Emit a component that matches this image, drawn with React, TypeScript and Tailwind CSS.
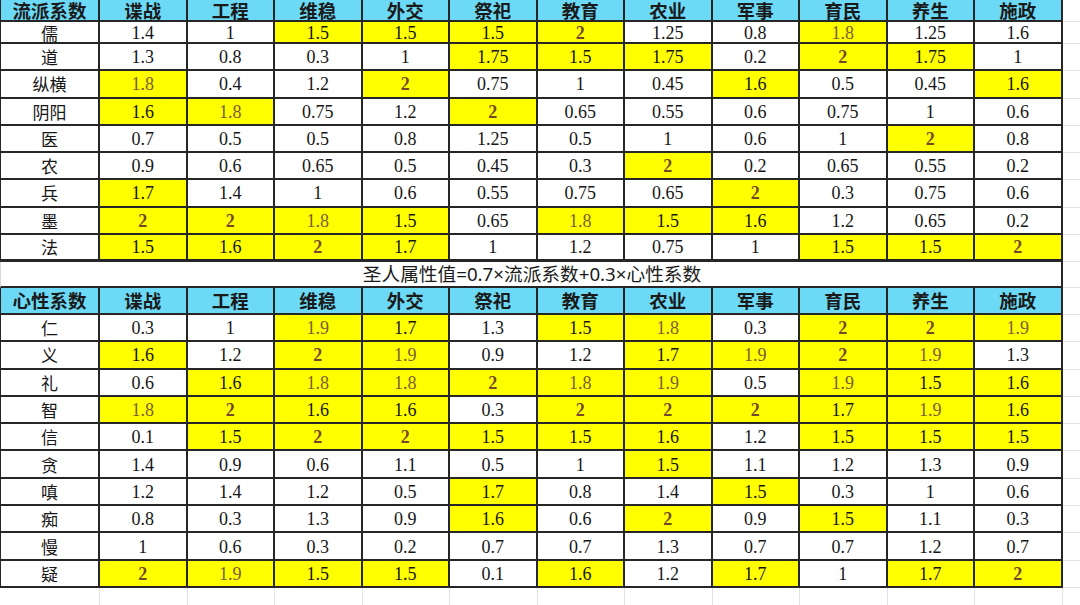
const cols = ['谍战', '工程', '维稳', '外交', '祭祀', '教育', '农业', '军事', '育民', '养生', '施政']

// "*" marks a highlighted (yellow) cell
const schools: [string, string][] = [
  ['儒', '1.4 1 1.5* 1.5* 1.5* 2* 1.25 0.8 1.8* 1.25 1.6'],
  ['道', '1.3 0.8 0.3 1 1.75* 1.5* 1.75* 0.2 2* 1.75* 1'],
  ['纵横', '1.8* 0.4 1.2 2* 0.75 1 0.45 1.6* 0.5 0.45 1.6*'],
  ['阴阳', '1.6* 1.8* 0.75 1.2 2* 0.65 0.55 0.6 0.75 1 0.6'],
  ['医', '0.7 0.5 0.5 0.8 1.25 0.5 1 0.6 1 2* 0.8'],
  ['农', '0.9 0.6 0.65 0.5 0.45 0.3 2* 0.2 0.65 0.55 0.2'],
  ['兵', '1.7* 1.4 1 0.6 0.55 0.75 0.65 2* 0.3 0.75 0.6'],
  ['墨', '2* 2* 1.8* 1.5* 0.65 1.8* 1.5* 1.6* 1.2 0.65 0.2'],
  ['法', '1.5* 1.6* 2* 1.7* 1 1.2 0.75 1 1.5* 1.5* 2*'],
]

const minds: [string, string][] = [
  ['仁', '0.3 1 1.9* 1.7* 1.3 1.5* 1.8* 0.3 2* 2* 1.9*'],
  ['义', '1.6* 1.2 2* 1.9* 0.9 1.2 1.7* 1.9* 2* 1.9* 1.3'],
  ['礼', '0.6 1.6* 1.8* 1.8* 2* 1.8* 1.9* 0.5 1.9* 1.5* 1.6*'],
  ['智', '1.8* 2* 1.6* 1.6* 0.3 2* 2* 2* 1.7* 1.9* 1.6*'],
  ['信', '0.1 1.5* 2* 2* 1.5* 1.5* 1.6* 1.2 1.5* 1.5* 1.5*'],
  ['贪', '1.4 0.9 0.6 1.1 0.5 1 1.5* 1.1 1.2 1.3 0.9'],
  ['嗔', '1.2 1.4 1.2 0.5 1.7* 0.8 1.4 1.5* 0.3 1 0.6'],
  ['痴', '0.8 0.3 1.3 0.9 1.6* 0.6 2* 0.9 1.5* 1.1 0.3'],
  ['慢', '1 0.6 0.3 0.2 0.7 0.7 1.3 0.7 0.7 1.2 0.7'],
  ['疑', '2* 1.9* 1.5* 1.5* 0.1 1.6* 1.2 1.7* 1 1.7* 2*'],
]

const cjk = { fontFamily: '"Noto Sans CJK SC", "Noto Sans", sans-serif' }
const mixed = { fontFamily: '"Noto Sans", "Noto Sans CJK SC", sans-serif' }
const serif = { fontFamily: '"Liberation Serif", "DejaVu Serif", serif' }

function Filler() {
  return <div className="flex-1 border-b border-[#e3e3e3]" />
}

function HeaderRow({ label, h }: { label: string; h: string }) {
  return (
    <div className={`flex ${h}`}>
      <div
        className="w-[100px] shrink-0 flex items-center justify-center bg-[#6cdaf7] border-l border-r-2 border-b-2 border-[#262626] text-[18.5px] font-bold text-[#1a1a1a] leading-none"
        style={cjk}
      >
        {label}
      </div>
      {cols.map((c) => (
        <div
          key={c}
          className="w-[87.5px] shrink-0 flex items-center justify-center bg-[#6cdaf7] border-r-2 border-b-2 border-[#262626] text-[18.5px] font-bold text-[#1a1a1a] leading-none"
          style={cjk}
        >
          {c}
        </div>
      ))}
      <Filler />
    </div>
  )
}

function ValueCell({ raw, last }: { raw: string; last: boolean }) {
  const hi = raw.endsWith('*')
  const v = raw.replace('*', '')
  let tone = 'text-[#161616]'
  if (hi && v === '2') tone = 'text-[#74482a] font-semibold'
  else if (hi && (v === '1.8' || v === '1.9')) tone = 'text-[#7a5c36]'
  return (
    <div
      className={`w-[87.5px] shrink-0 flex items-center justify-center pt-[1px] border-r-2 border-[#262626] text-[18px] leading-none ${
        last ? 'border-b-[3px]' : 'border-b-2'
      } ${hi ? 'bg-[#ffff00]' : 'bg-white'} ${tone}`}
      style={serif}
    >
      {v}
    </div>
  )
}

function DataRow({ label, values, h, last = false }: { label: string; values: string; h: string; last?: boolean }) {
  return (
    <div className={`flex ${h}`}>
      <div
        className={`w-[100px] shrink-0 flex items-center justify-center bg-white border-l border-r-2 border-[#262626] text-[17px] text-[#161616] leading-none ${
          last ? 'border-b-[3px]' : 'border-b-2'
        }`}
        style={cjk}
      >
        {label}
      </div>
      {values.split(' ').map((v, i) => (
        <ValueCell key={i} raw={v} last={last} />
      ))}
      <Filler />
    </div>
  )
}

export default function App() {
  return (
    <div className="w-[1080px] h-[605px] overflow-hidden bg-white">
      <HeaderRow label="流派系数" h="h-[22px]" />
      {schools.map(([label, values], i) => (
        <DataRow
          key={label}
          label={label}
          values={values}
          h={i === 0 ? 'h-[22px]' : 'h-[27.25px]'}
          last={i === schools.length - 1}
        />
      ))}

      <div className="flex h-[26px]">
        <div
          className="w-[1063px] shrink-0 flex items-center justify-center border-l border-[#d8d8d8] border-b-2 border-b-[#262626] relative text-[18.7px] text-[#1a1a1a] leading-none"
          style={mixed}
        >
          <span>圣人属性值=0.7×流派系数+0.3×心性系数</span>
          <div className="absolute right-0 top-0 bottom-[-2px] w-[2px] bg-[#262626]" />
        </div>
        <Filler />
      </div>

      <HeaderRow label="心性系数" h="h-[27px]" />
      {minds.map(([label, values]) => (
        <DataRow key={label} label={label} values={values} h="h-[27.3px]" />
      ))}

      <div className="flex h-[20px]">
        <div className="w-[100px] shrink-0 border-r border-[#e3e3e3]" />
        {cols.map((c) => (
          <div key={c} className="w-[87.5px] shrink-0 border-r border-[#e3e3e3]" />
        ))}
        <div className="flex-1" />
      </div>
    </div>
  )
}
